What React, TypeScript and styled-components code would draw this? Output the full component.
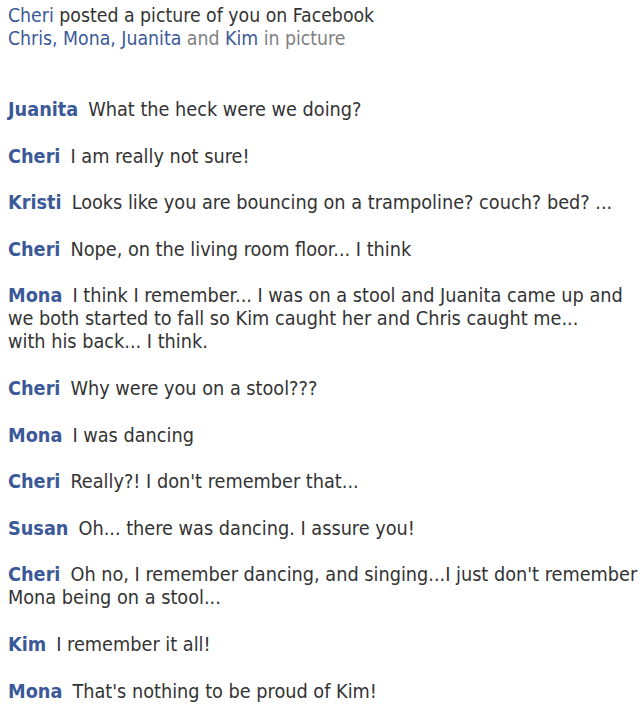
import styled, { createGlobalStyle } from "styled-components";

const GlobalStyle = createGlobalStyle`
  body {
    margin: 0;
    background: #ffffff;
    font-family: "DejaVu Sans Condensed", "DejaVu Sans", sans-serif;
  }
`;

const Page = styled.div`
  padding: 4px 8px 0 8px;
  line-height: 23px;
  color: #333333;
`;

const Header = styled.header`
  font-size: 19.3px;
  margin-bottom: 48px;
`;

const Line = styled.div``;

const Link = styled.span`
  color: #3b5998;
`;

const Muted = styled.span`
  color: #808080;
`;

const Thread = styled.div`
  display: flex;
  flex-direction: column;
  gap: 23.6px;
  font-size: 19.7px;
`;

const Comment = styled.p`
  margin: 0;
  white-space: nowrap;
`;

const Author = styled.span`
  color: #3b5998;
  font-weight: bold;
  margin-right: 10px;
`;

const comments: { author: string; text: string[] }[] = [
  { author: "Juanita", text: ["What the heck were we doing?"] },
  { author: "Cheri", text: ["I am really not sure!"] },
  { author: "Kristi", text: ["Looks like you are bouncing on a trampoline? couch? bed? ..."] },
  { author: "Cheri", text: ["Nope, on the living room floor... I think"] },
  {
    author: "Mona",
    text: [
      "I think I remember... I was on a stool and Juanita came up and",
      "we both started to fall so Kim caught her and Chris caught me...",
      "with his back... I think.",
    ],
  },
  { author: "Cheri", text: ["Why were you on a stool???"] },
  { author: "Mona", text: ["I was dancing"] },
  { author: "Cheri", text: ["Really?! I don't remember that..."] },
  { author: "Susan", text: ["Oh... there was dancing. I assure you!"] },
  {
    author: "Cheri",
    text: ["Oh no, I remember dancing, and singing...I just don't remember", "Mona being on a stool..."],
  },
  { author: "Kim", text: ["I remember it all!"] },
  { author: "Mona", text: ["That's nothing to be proud of Kim!"] },
];

export default function App() {
  return (
    <Page>
      <GlobalStyle />
      <Header>
        <Line>
          <Link>Cheri</Link> posted a picture of you on Facebook
        </Line>
        <Line>
          <Link>Chris, Mona, Juanita</Link> <Muted>and</Muted> <Link>Kim</Link> <Muted>in picture</Muted>
        </Line>
      </Header>
      <Thread>
        {comments.map((c, i) => (
          <Comment key={i}>
            <Author>{c.author}</Author>
            {c.text.map((t, j) => (
              <span key={j}>
                {j > 0 && <br />}
                {t}
              </span>
            ))}
          </Comment>
        ))}
      </Thread>
    </Page>
  );
}
